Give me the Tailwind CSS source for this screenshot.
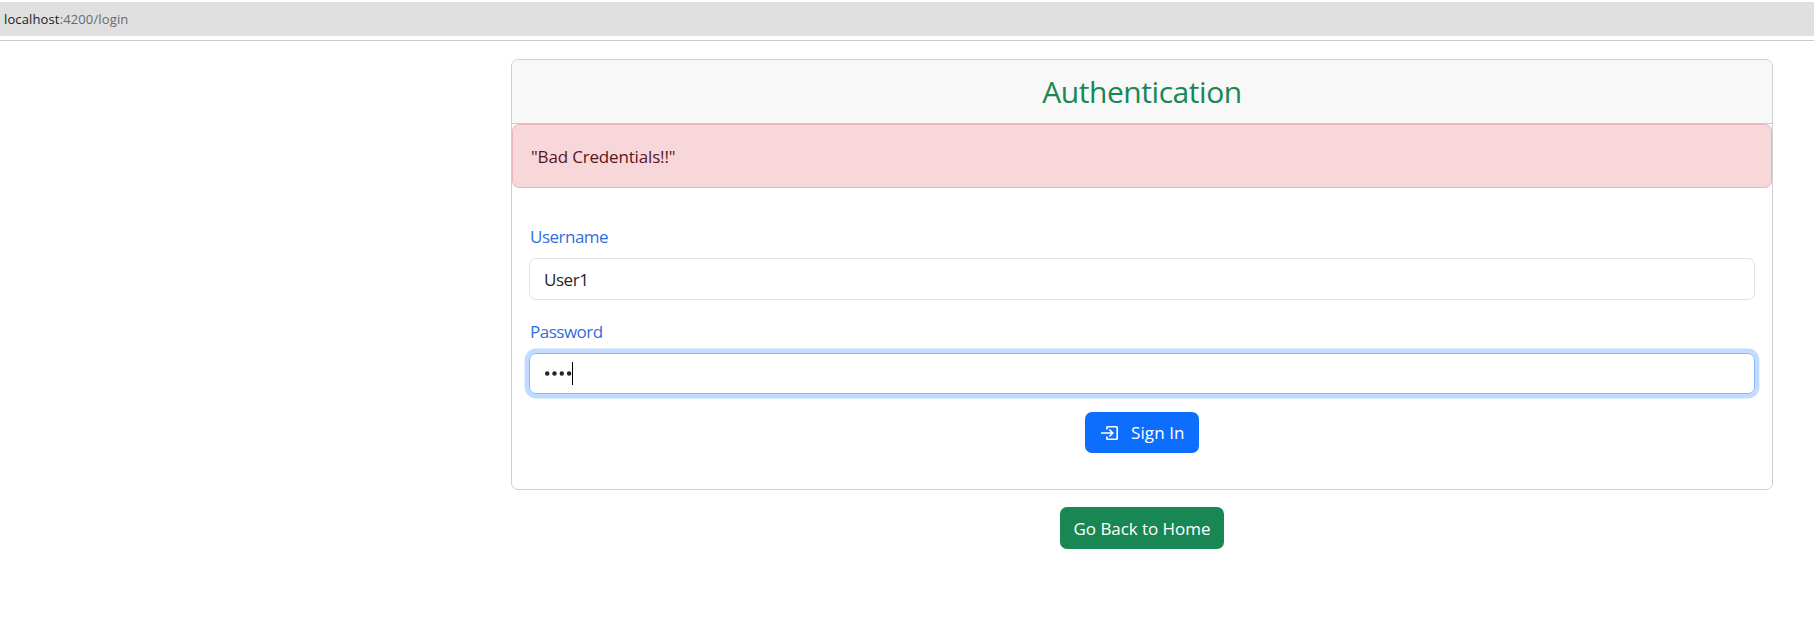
<!DOCTYPE html>
<html lang="en">
<head>
<meta charset="utf-8">
<title>Login</title>
<script src="https://cdn.jsdelivr.net/npm/@tailwindcss/browser@4"></script>
</head>
<body class="bg-white font-['Open_Sans',sans-serif] text-[17px] text-[#212529] h-[622px] overflow-hidden">
<div class="pt-[2px] h-[41px] border-b border-[#c8c9ca]">
  <div class="h-[34px] bg-[#e0e0e1] flex items-center pl-[4px] text-[13px] leading-none tracking-[0.13px]"><span class="text-[#686a6c]"><span class="text-[#202124]">localhost</span>:4200/login</span></div>
</div>
<main class="ml-[511px] w-[1262px] mt-[18px] flex flex-col items-center">
  <section class="w-full h-[431px] border border-[#cfd0d1] rounded-[7px]">
    <header class="h-[64px] bg-[#f8f8f8] border-b border-[#cacbcc] rounded-t-[6px] flex items-center justify-center">
      <h1 class="text-[#198754] text-[30px] leading-none tracking-[-0.45px]">Authentication</h1>
    </header>
    <div class="h-[64px] bg-[#f8d7da] border border-[#eab6bc] rounded-[7px] flex items-center pl-[18px] pt-[2px] text-[#58151c] tracking-[-0.17px]">"Bad Credentials!!"</div>
    <form class="px-[17px] pt-[36px] flex flex-col">
      <label class="h-[26px] leading-[26px] text-[#2f6fdc] self-start pl-px tracking-[-0.5px]">Username</label>
      <div class="mt-[8px] h-[42px] border border-[#dee2e6] rounded-[7px] flex items-center pl-[14px] pt-px tracking-[-0.45px]">User1</div>
      <label class="mt-[19px] h-[26px] leading-[26px] text-[#2f6fdc] self-start pl-px tracking-[-0.5px]">Password</label>
      <div class="mt-[8px] h-[41px] border border-[#86b7fe] rounded-[7px] ring-[4.4px] ring-[#c2dbfe] flex items-center pl-[15px]">
        <svg class="w-[27px] h-[5px]" viewBox="0 0 27 5" fill="#212529"><circle cx="2.200" cy="2.500" r="2.200"/><circle cx="9.500" cy="2.500" r="2.200"/><circle cx="16.800" cy="2.500" r="2.200"/><circle cx="24.100" cy="2.500" r="2.200"/></svg>
        <i class="w-px h-[23px] bg-black"></i>
      </div>
      <div class="mt-[18px] h-[41px] w-[114px] self-center rounded-[7px] bg-[#0d6efd] text-white flex items-center pl-[16px]"><svg class="size-[18px]" viewBox="0 0 18 18" fill="none" stroke="currentColor" stroke-width="1.6"><path d="M5.800 5.500V3.500Q5.800 2.800 6.500 2.800H15.500Q16.200 2.800 16.200 3.500V14.500Q16.200 15.200 15.500 15.200H6.500Q5.800 15.200 5.800 14.500V12.500M0 9h11.500M8.300 5.500l3.500 3.500L8.300 12.500"/></svg><span class="ml-[12px] tracking-[0.1px]">Sign In</span></div>
    </form>
  </section>
  <div class="mt-[17px] h-[42px] w-[164px] rounded-[7px] bg-[#198754] text-white flex items-center justify-center pt-px tracking-[-0.05px]">Go Back to Home</div>
</main>
</body>
</html>
